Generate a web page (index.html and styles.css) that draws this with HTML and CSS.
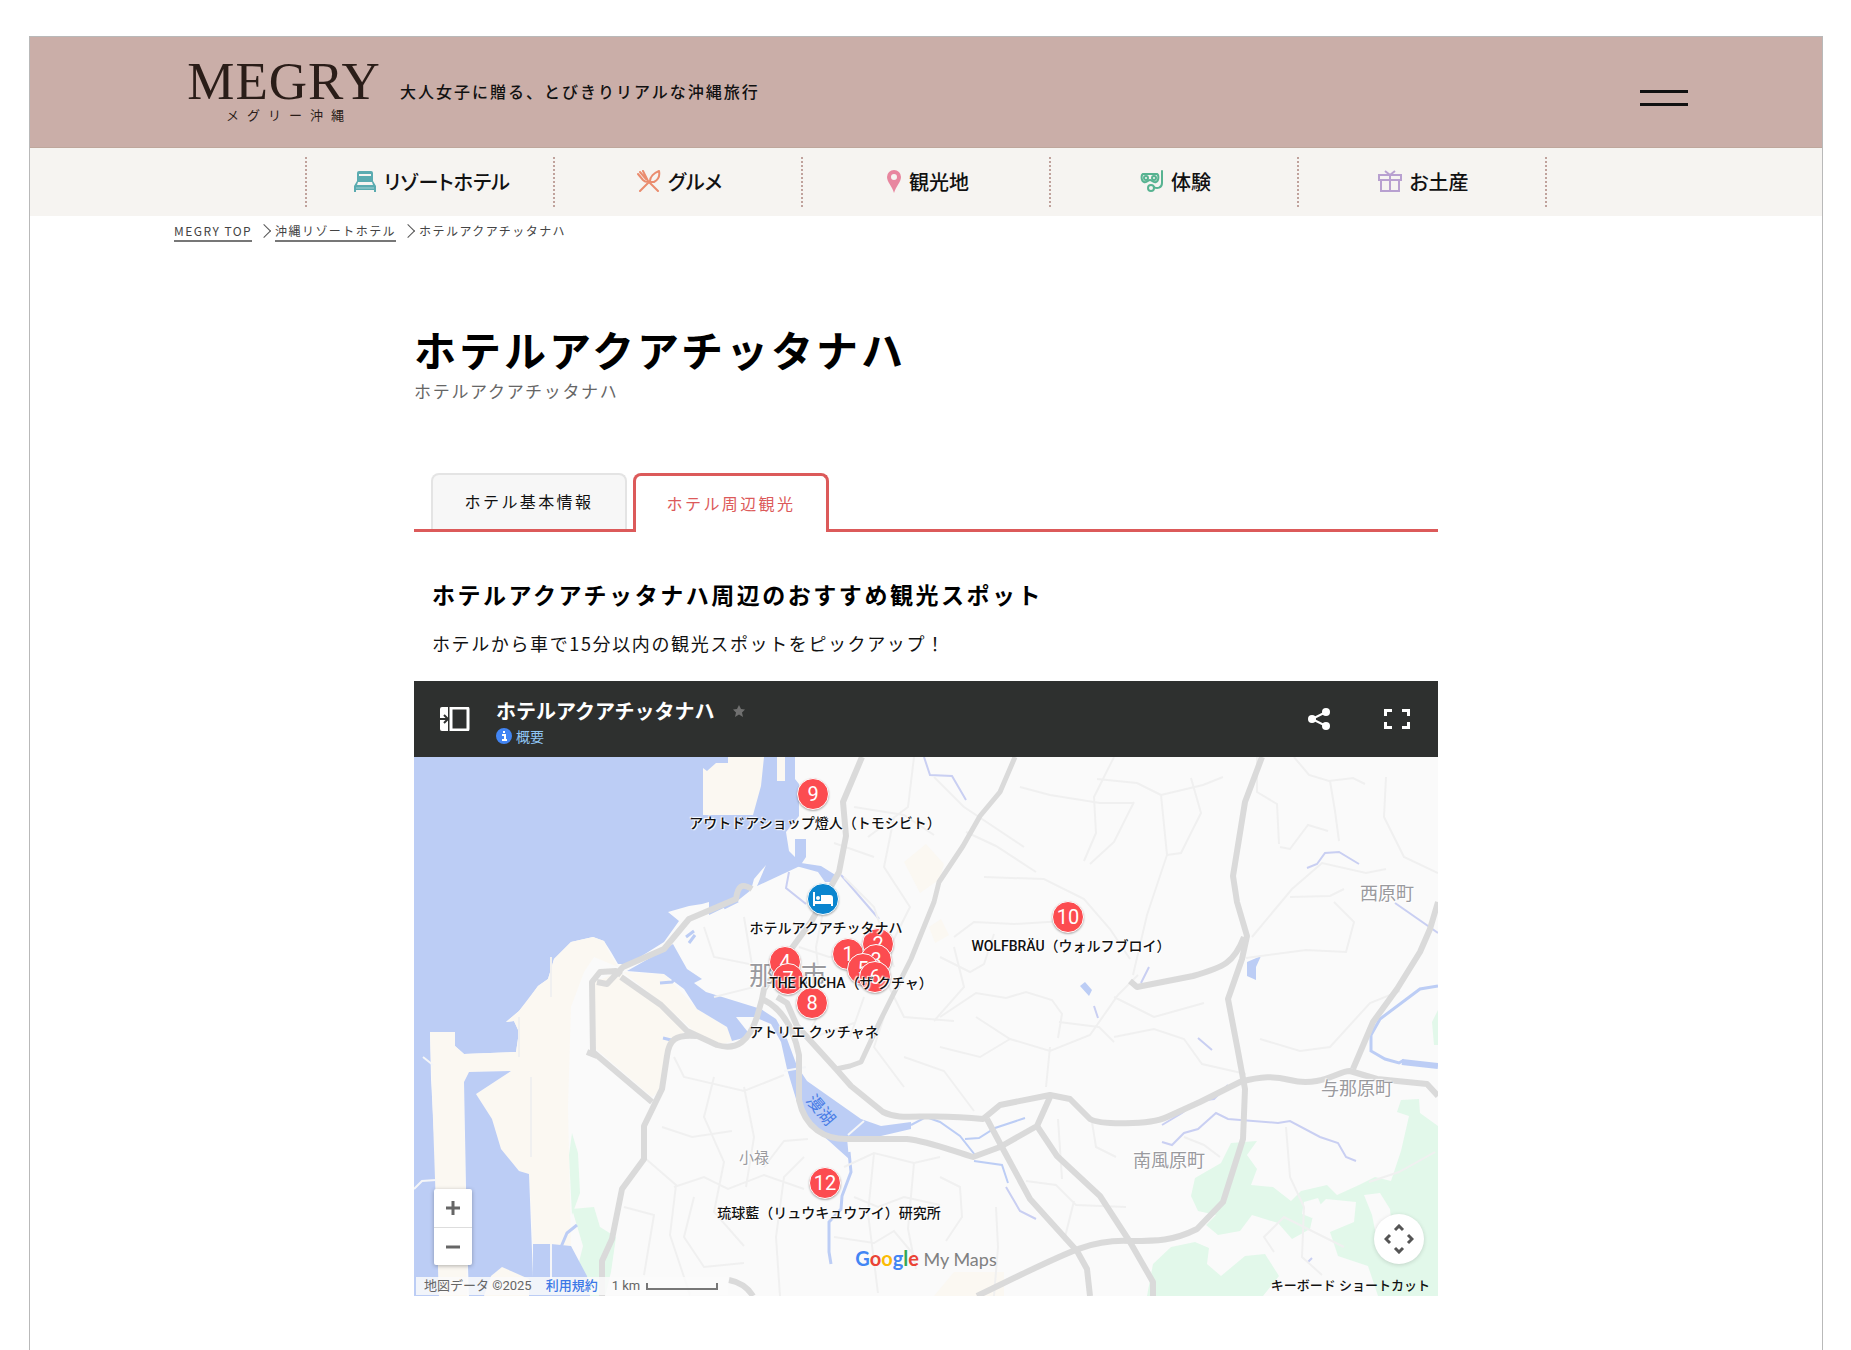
FILE: index.html
```html
<!DOCTYPE html>
<html lang="ja">
<head>
  <meta charset="UTF-8" />
  <meta name="viewport" content="width=device-width, initial-scale=1" />
  <title>ホテルアクアチッタナハ | MEGRY</title>
  <link rel="stylesheet" href="styles.css">
</head>
<body>
<div class="page">
  <header class="header">
    <a class="logo" href="#">
      <span class="logo-name">MEGRY</span>
      <span class="logo-sub">メグリー沖縄</span>
    </a>
    <p class="tagline">大人女子に贈る、とびきりリアルな沖縄旅行</p>
    <button class="menu-btn" aria-label="メニュー"><span></span><span></span></button>
  </header>

  <nav class="gnav">
    <ul>
      <li><a href="#">
        <svg width="24" height="22" viewBox="0 0 24 22"><path d="M4 11V3a2 2 0 0 1 2-2h12a2 2 0 0 1 2 2v8l3 5v6h-2v-2H3v2H1v-6z" fill="#5aabb0"/><path d="M6 5h12" stroke="#f6f4f1" stroke-width="2"/><path d="M5 12h14l1 3H4z" fill="#f6f4f1"/><path d="M3 18h18" stroke="#a5d2d4" stroke-width="1"/></svg>
        リゾートホテル</a></li>
      <li><a href="#">
        <svg width="24" height="22" viewBox="0 0 24 22" fill="none" stroke="#ea8c6e" stroke-width="2" stroke-linecap="round" stroke-linejoin="round"><path d="M1 4l5 6c2 2 4 2 5 1L6 1M3 2l6 7M11 11l10 10"/><path d="M3 21l10-10c0-4 4-8 9-10 1 5-1 9-5 11l-3 0"/></svg>
        グルメ</a></li>
      <li><a href="#">
        <svg width="16" height="23" viewBox="0 0 16 23"><path fill-rule="evenodd" d="M8 0a7 7 0 0 1 7 7c0 5-5 9-7 16C6 16 1 12 1 7a7 7 0 0 1 7-7zm0 4a3 3 0 1 0 0 6 3 3 0 0 0 0-6z" fill="#e8869f"/></svg>
        観光地</a></li>
      <li><a href="#">
        <svg width="24" height="22" viewBox="0 0 24 22" fill="none" stroke="#57b391" stroke-width="2" stroke-linecap="round"><path d="M3 4h14c2 1 2 7-1 8-3 1-4-2-6-2s-3 3-6 2S1 5 3 4z"/><circle cx="6" cy="8" r="2"/><circle cx="14" cy="8" r="2"/><path d="M22 1v12c0 5-5 6-8 4"/><circle cx="11" cy="18" r="3"/></svg>
        体験</a></li>
      <li><a href="#">
        <svg width="24" height="22" viewBox="0 0 24 22" fill="none" stroke="#b8a0d0" stroke-width="2"><path d="M1 5h22v5H1zM3 10h18v11H3zM12 5v16M7 1l5 4 5-4"/></svg>
        お土産</a></li>
    </ul>
  </nav>

  <ol class="breadcrumb">
    <li><a href="#">MEGRY TOP</a></li>
    <li><a href="#">沖縄リゾートホテル</a></li>
    <li>ホテルアクアチッタナハ</li>
  </ol>

  <main class="main">
    <h1>ホテルアクアチッタナハ</h1>
    <p class="kana">ホテルアクアチッタナハ</p>

    <div class="tabs" role="tablist">
      <button class="tab" role="tab">ホテル基本情報</button>
      <button class="tab active" role="tab" aria-selected="true">ホテル周辺観光</button>
    </div>

    <h2>ホテルアクアチッタナハ周辺のおすすめ観光スポット</h2>
    <p class="lead">ホテルから車で15分以内の観光スポットをピックアップ！</p>

    <section class="mymap">
      <div class="map-bar">
        <button aria-label="パネルを開く">
          <svg width="30" height="24" viewBox="0 0 30 24"><path d="M2 0h6v24H2a2 2 0 0 1-2-2V2a2 2 0 0 1 2-2z" fill="#fff"/><path d="M11 1h16a1 1 0 0 1 1 1v20a1 1 0 0 1-1 1H11z" fill="none" stroke="#fff" stroke-width="3"/><path d="M0 12h7M4 8l4 4-4 4" fill="none" stroke="#2e302f" stroke-width="2"/></svg>
        </button>
        <div class="map-title">
          <div class="map-name">ホテルアクアチッタナハ
            <svg width="12" height="12" viewBox="0 0 24 24"><path d="M12 0l4 8 8 1-6 6 2 9-8-5-8 5 2-9-6-6 8-1z" fill="#707070"/></svg>
          </div>
          <a class="map-info" href="#"><svg width="16" height="16" viewBox="0 0 16 16"><circle cx="8" cy="8" r="8" fill="#4285f4"/><path d="M6 7h3v5M6 12h5M7 4h2" stroke="#fff" stroke-width="2" fill="none"/></svg>概要</a>
        </div>
        <button class="share" aria-label="共有">
          <svg width="22" height="22" viewBox="0 0 22 22"><path d="M18 4L4 11l14 7" fill="none" stroke="#fff" stroke-width="2"/><circle cx="18" cy="4" r="4" fill="#fff"/><circle cx="4" cy="11" r="4" fill="#fff"/><circle cx="18" cy="18" r="4" fill="#fff"/></svg>
        </button>
        <button aria-label="全画面表示">
          <svg width="26" height="20" viewBox="0 0 26 20" fill="none" stroke="#fff" stroke-width="3"><path d="M1.500 7V1.500H8M18 1.500h6.500V7M24.500 13v5.500H18M8 18.500H1.500V13"/></svg>
        </button>
      </div>

      <div class="map-view">
        <div class="canvas">
          <svg class="tiles" width="1024" height="539" viewBox="0 0 1024 539">
            <!-- sea, with the land laid over it -->
            <rect width="1024" height="539" fill="#bccdf5"/>
            <path fill="#fafafa" d="M381 0V22L385 27V59L372 75L375 94L381 100V82H392V100L386 109L343 129L352 108L340 122L337 133L322 145L295 158V145L288 147L275 149L254 155L265 164L250 185L215 207H204L197 195L190 184L179 180L157 185L140 202L134 222L124 229L115 242L105 254L92 265L100 264L105 275L102 295L50 297L41 289V275H16L17 322L23 430L25 539H1024V0z"/>
            <!-- airport and reclaimed land -->
            <g fill="#fbf8f2">
              <path d="M289 11L293 14L302 6H314V0H350L347 29L339 58H289zM363 0H371V24H363z"/>
              <path d="M179 180L157 185L140 202L134 222L124 229L105 254L92 265L100 264L105 275L102 295L50 297L41 289V275H16L25 539H53L50 325L55 315L97 314L62 337L78 362L87 392L105 414L115 417L119 487L157 489L154 350L157 250L170 215L180 200L204 210L195 195L190 184z"/>
              <path d="M180 225L205 215L245 245L273 272L263 282L253 299L248 332L238 340L182 292z"/>
              <path d="M209 215L250 217L283 252L313 270L318 284L300 290L280 274L247 245z"/>
              <path d="M490 105l22-18 18 20-4 15-20 14zM515 170l12-8 8 16-14 8zM540 515h50v24h-70z"/>
            </g>
            <!-- parks -->
            <g fill="#e2f8ea">
              <path d="M158 376l6 20 2 40-8 22-3-60zM158 452l22-2 6 20 16 10-5 35-6 24h-17l-10-30 5-20z"/>
              <path d="M983 355l4-12 18-1 1 14 18 13v170h-60l-10-30-30-10-8-24 24-10 2-20-30-3-12 12-4 18-18 10-14-16-26-8-12 16-22 4-12-10 10-10-18-4-7-15 4-18 26-15 10-20 26-2-10 14 10 14-6 16 22 2 18 14 10-10 26-6 10 10 22-10 16-8 16 4 10-30 8-35z"/>
              <path d="M733 539l6-32 18-17 24-5 14 6-2 16 14 12 24-20 20-2 14 22-16 20z"/>
              <path d="M1018 265l6-12v35h-4z"/>
            </g>
            <path fill="#fafafa" d="M890 445l14-4 6 14-12 6-10-4zM950 438l16-2 10 16 2 20-16 6-4-20z"/>
            <g fill="#bccdf5">
              <path d="M50 325L55 315L97 314L62 337L78 362L87 392L105 414L115 417L119 520V539H55L53 482z"/>
              <path d="M119 487H137L157 489L173 519L176 539H119z"/>
              <path d="M243 197L259 187L273 212L288 222L280 226L292 235L347 252L362 262L373 282L383 309L393 324L447 362L467 369L497 365V372L467 379L433 381L435 402L415 384L403 374L387 355L382 342L373 312L367 285L357 267L340 260L322 260L337 279L318 284L313 270L283 252L270 232L250 217L213 214z"/>
              <path d="M382 109l5-3 20 3 16 10-1 6h-11l-7-10z"/>
              <path d="M833 205l14-6-5 11v13l-9-4zM666 229l5-4 7 8-3 6z"/>
            </g>
            <path fill="#fbf8f2" d="M77 519l11-9 27 12v17H70z"/>
            <path d="M0 432l8-8 14-1M9 300l10 8M137 487v40M392 310l-22 4M434 378l16-14" stroke="#f5f6f8" stroke-width="2" fill="none"/>
            <g fill="none" stroke="#bccdf5" stroke-width="3">
              <path d="M163 468l-10 8-6 14M435 395l2 20-9 24-1 13-12 13v30l2 12M246 226l12-1 4-4M249 281l12 3M272 180l8-6M275 186l6-8M310 151l14-7" />
              <path d="M497 368l15-8 14 5 20 14 15 19M560 404l28 4 6 18M551 382l14-1 16-10 30-10" stroke-width="2"/>
              <path d="M1024 229l-18 3-40 30-9 16v16l14 8 14 4 5-3" />
              <path d="M988 305l36 4" stroke-width="6"/>
            </g>
            <g fill="none" stroke="#c9cff2" stroke-width="2">
              <path d="M510 0l6 18 22 1 14 24M427 118l38 44M375 115l-3 16 20 16M893 111l10-4 8-11 14-1 20 12M981 146l43 30M727 226l8-16M592 430l14 24 16 8M748 368l20-12 16-12 16-2 14-14M748 385l10 3 12-12 14-4 18-16 12 6 50 4 12-2 30 16 18 6 8 14 10 4M680 249l4 12M784 281l14 12M894 505l4-4"/>
            </g>
            <!-- local streets -->
            <g fill="none" stroke="#f0f0f0" stroke-width="2">
              <path d="M606 30l30 8 50 8h34M700 0l-20 40 2 36-12 28M683 22l40 4 24 12 6 60-20 60-14 60M720 45l-20 40-24 22M747 38l42-10 20-8M753 98l14-2 20-40-10-35M570 120l60 2 40 20 26 30 20 30M540 180l20-15 40 2 50-3M526 200l30 15 14-8 10-30"/>
              <path d="M843 0v35l20 12 2 40M880 0l15 18 20 6 24-3 12 6M916 24l5 30 4 30M972 20l-2 40 20 40 34 16M866 90l10 2 18-24 20 6M838 180l40-48 30-26 44 10 20-4M876 140l40-1 14-7M920 145l20 20-8 30-40-2-60 8M846 282l40 12 30-4 40-44 30-12"/>
              <path d="M526 260l36-24 30 5 20-6 26 8 10 14-4 24M562 260l34 22 40 12 40-16 28-40 20-20M596 282l-30 18-40-10M636 290l-4 40M700 280l40-8 30 10 18 25 44 10M645 265l40 5 15 15M700 240l40 20 50-14"/>
              <path d="M526 420l20 10 2 30-16 24M582 450l2 40-4 49M644 362l4 60M612 424l30 4 20 20 50 2M702 400l-20-10-4-25M660 444l-10 40M770 380l20 8 16 12M872 370l4 50 14 30-2 50 20 18M955 425l30-10 36-20M860 495l-10-15 20-20 60 30"/>
              <path d="M260 300l10 20 60 14 40-16M300 320l-10 40 20 45-10 50 30 34M248 370l30 10 40-6M330 330l10 50-8 50M260 430l30-10 24 12 36-14 40 14M280 440l-10 40 20 30 40-4M232 402l30 26-6 50 20 60M390 400l-20 20-8 60 4 59M350 410l20-26 24-2M430 410l30-14 40 10 26-6M440 440l24 10 26-10 36 8M420 480l40 6 20-12 20 24M460 396l-6 60 10 80M500 406l-6 66 8 40M210 450l30 8-10 60"/>
              <path d="M290 170l10 30 50 10 20-12M330 160l10 60M300 240l40-10M385 190l30 10 44-4M410 150l-8 40 6 60-10 20M430 120l30 30 20 60M460 100l-40-14M440 50l50 8 30 20M480 60l-10 50 26 40-20 40M500 0l-6 50-40 30M520 20l30 30 60 40M470 220l20 40 50 4M450 240l-14 40M470 260l-10 30 30 40M400 280l40-14M490 300l40 14 30 40M540 190l10 40-30 34"/>
              <path d="M552 75l30 14 40 26M105 300v-40M117 320v80M137 200v40"/>
            </g>
            <!-- main roads -->
            <g fill="none" stroke="#dadada" stroke-width="6" stroke-linejoin="round">
              <path d="M448 0l-19 45 3 34-7 36-28 50-22 30-25 37-2 10-5 18c-8 24-20 34-40 28l-30-14-26-26-40-28"/>
              <path d="M338 132c-10-6-14-4-16 10l-47 20-25 30-41 18-16 17-10-2M207 218l-5-4-16 1-8 10 1 70 59 50M173 295l10 4"/>
              <path d="M283 279c-22-2-28 4-30 20l-5 33-18 37v33l-22 30-10 50-10 22v35"/>
              <path d="M350 243c20 10 30 30 35 55v45c6 28 26 40 50 39h58c20 2 40 10 66 18l27-10 37-21 13-29"/>
              <path d="M363 240l10 6 10 23 39 43 15 17 32 26c20 10 40 0 100 7l17-14 50-10 20 4 20 20c10 6 60 6 77-2l33-15 40-20c22-6 34-6 50-2 30 8 50-10 60-9l27 8 50 5 11 12"/>
              <path d="M601 0l-15 35-20 24-17 30-24 36-5 20-23 57-30 60-20 43-11 4-14 3" stroke-width="5"/>
              <path d="M848 0l-17 45-12 74 4 26 10 34-5 23-14 40 9 47 8 43-2 50-20 63-26 27c-24 12-40 12-67 12-40-2-60 10-153 55"/>
              <path d="M830 180c-10 26-20 30-51 39l-56 11-7-6"/>
              <path d="M573 362l16 30 27 50 47 52 10 18 3 27M623 369l20 30 43 40 30 46 23 40v14"/>
              <path d="M1024 145l-8 27-10 23-23 37-24 33-20 47M315 523c10 2 18 6 24 16"/>
            </g>
          </svg>

          <span class="place big naha">那覇市</span>
          <span class="place small oroku">小禄</span>
          <span class="place nishihara">西原町</span>
          <span class="place yonabaru">与那原町</span>
          <span class="place haebaru">南風原町</span>
          <span class="place lake">漫湖</span>

          <button class="pin p9">9</button>
          <button class="pin hotel" aria-label="ホテル"><svg width="20" height="14" viewBox="0 0 20 14"><path d="M1 0v14M1 11h18v3" stroke="#fff" stroke-width="2" fill="none"/><circle cx="5" cy="6" r="2" fill="#fff"/><path d="M8 3h9a3 3 0 0 1 3 3v6H2V9h6z" fill="#fff"/></svg></button>
          <button class="pin p10">10</button>
          <button class="pin p1">1</button>
          <button class="pin p2">2</button>
          <button class="pin p3">3</button>
          <button class="pin p4">4</button>
          <button class="pin p5">5</button>
          <button class="pin p6">6</button>
          <button class="pin p7">7</button>
          <button class="pin p8">8</button>
          <button class="pin p12">12</button>

          <span class="pin-label l9">アウトドアショップ燈人（トモシビト）</span>
          <span class="pin-label lhotel">ホテルアクアチッタナハ</span>
          <span class="pin-label l10">WOLFBRÄU（ウォルフブロイ）</span>
          <span class="pin-label l7">THE KUCHA（ザ クチャ）</span>
          <span class="pin-label l8">アトリエ クッチャネ</span>
          <span class="pin-label l12">琉球藍（リュウキュウアイ）研究所</span>
        </div>

        <div class="zoom">
          <button aria-label="拡大"><svg width="14" height="14" viewBox="0 0 14 14"><path d="M7 0v14M0 7h14" stroke="#666" stroke-width="3"/></svg></button>
          <button aria-label="縮小"><svg width="14" height="14" viewBox="0 0 14 14"><path d="M0 7h14" stroke="#666" stroke-width="3"/></svg></button>
        </div>
        <button class="camera" aria-label="地図のカメラ コントロール">
          <svg width="30" height="30" viewBox="0 0 30 30" fill="none" stroke="#555" stroke-width="3"><path d="M11 6l4-4 4 4M11 24l4 4 4-4M6 11l-4 4 4 4M24 11l4 4-4 4"/></svg>
        </button>
        <div class="google"><b><i class="g-blue">G</i><i class="g-red">o</i><i class="g-yellow">o</i><i class="g-blue">g</i><i class="g-green">l</i><i class="g-red">e</i></b> My Maps</div>
        <div class="credit">
          <span>地図データ ©2025</span>
          <a href="#">利用規約</a>
          <span class="scale">1 km<i></i></span>
        </div>
        <button class="shortcut">キーボード ショートカット</button>
      </div>
    </section>
  </main>
</div>
</body>
</html>
```
FILE: styles.css
```css
* {
  box-sizing: border-box;
}
body {
  margin: 0;
  padding: 36px 28px 0 29px;
  background: #fff;
  color: #111;
  font-family: "Noto Sans CJK JP", "Noto Sans", sans-serif;
}
h1, h2, p, ul, ol {
  margin: 0;
  padding: 0;
}
ul, ol {
  list-style: none;
}
a {
  color: inherit;
  text-decoration: none;
}
button {
  margin: 0;
  padding: 0;
  border: none;
  background: none;
  color: inherit;
  font-family: inherit;
  cursor: pointer;
}
svg {
  display: block;
  flex: none;
}
.page {
  min-height: calc(100vh - 36px);
  border: 1px solid #b9b9b9;
  border-bottom: none;
}

/* header */
.header {
  display: flex;
  align-items: center;
  height: 111px;
  padding: 0 134px 2px 158px;
  background: #caaea8;
  border-bottom: 1px solid #bfa79c;
}
.logo {
  display: flex;
  flex-direction: column;
  align-items: center;
  width: 192px;
  color: #2a1d18;
}
.logo-name {
  font-family: "Liberation Serif", serif;
  font-size: 53px;
  line-height: 48px;
  letter-spacing: 1px;
}
.logo-sub {
  padding-left: 10px;
  font-size: 13px;
  line-height: 20px;
  letter-spacing: 8px;
}
.tagline {
  margin-left: 20px;
  font-size: 16px;
  font-weight: 500;
  letter-spacing: 2px;
}
.menu-btn {
  display: flex;
  flex-direction: column;
  gap: 10px;
  width: 48px;
  margin: 14px 0 0 auto;
}
.menu-btn span {
  height: 3px;
  background: #111;
}

/* category nav */
.gnav {
  padding: 9px 0;
  background: #f6f4f1;
}
.gnav ul {
  display: flex;
  width: 1242px;
  max-width: 100%;
  margin: 0 auto;
  border-left: 2px dotted #c0a29c;
}
.gnav li {
  flex: 1;
  border-right: 2px dotted #c0a29c;
}
.gnav a {
  display: flex;
  align-items: center;
  justify-content: center;
  gap: 7px;
  height: 50px;
  padding: 0 0 2px 3px;
  font-size: 20px;
  font-weight: 500;
  font-feature-settings: "palt";
}

.breadcrumb {
  display: flex;
  padding: 6px 144px 0;
  color: #444;
  font-size: 12px;
  line-height: 18px;
  letter-spacing: 0.12em;
}
.breadcrumb li + li::before {
  content: "";
  display: inline-block;
  width: 9px;
  height: 9px;
  margin: 0 6px 0 7px;
  border-top: 1px solid #555;
  border-right: 1px solid #555;
  transform: rotate(45deg);
}
.breadcrumb a {
  display: inline-block;
  border-bottom: 2px solid #777;
}

/* hotel page */
.main {
  width: 1024px;
  max-width: 100%;
  margin: 0 auto;
  padding: 77px 0 54px;
}
h1 {
  color: #000;
  font-size: 42px;
  line-height: 60px;
  letter-spacing: 3px;
}
.kana {
  color: #666;
  font-size: 17px;
  line-height: 24px;
  letter-spacing: 0.1em;
}
.tabs {
  display: flex;
  gap: 6px;
  margin-top: 70px;
  padding: 0 17px;
  border-bottom: 3px solid #dc5a5a;
}
.tab {
  width: 196px;
  height: 56px;
  padding-bottom: 2px;
  border: 2px solid #e4e4e4;
  border-bottom: none;
  border-radius: 8px 8px 0 0;
  background: #f7f7f7;
  font-size: 16px;
  letter-spacing: 0.15em;
}
.tab.active {
  height: 59px;
  margin-bottom: -3px;
  border: 3px solid #dc5a5a;
  border-bottom: none;
  background: #fff;
  color: #dc5a5a;
}
h2 {
  margin: 46px 18px 0;
  color: #000;
  font-size: 23px;
  line-height: 32px;
  letter-spacing: 0.11em;
}
.lead {
  margin: 19px 18px 24px;
  font-size: 18px;
  line-height: 28px;
  letter-spacing: 0.09em;
}

/* embedded map */
.map-bar {
  display: flex;
  align-items: center;
  height: 76px;
  padding: 0 28px 0 26px;
  background: #2e302f;
  color: #fff;
}
.map-title {
  margin: 0 auto 0 26px;
  padding-top: 6px;
}
.map-name {
  display: flex;
  align-items: center;
  gap: 18px;
  font-size: 20px;
  font-weight: 700;
  line-height: 28px;
}
.map-info {
  display: flex;
  align-items: center;
  gap: 4px;
  color: #8ec5f5;
  font-size: 14px;
  line-height: 22px;
}
.share {
  margin-right: 54px;
}
.map-view {
  position: relative;
  height: 539px;
  overflow: hidden;
  background: #fafafa;
  font-family: Roboto, "Noto Sans CJK JP", sans-serif;
}
.canvas {
  position: absolute;
  top: 0;
  left: 50%;
  width: 1024px;
  height: 539px;
  margin-left: -512px;
}
.place, .pin-label {
  position: absolute;
  transform: translate(-50%, -50%);
  white-space: nowrap;
  text-shadow: 0 0 2px #fff, 1px 1px 1px #fff, -1px -1px 1px #fff;
}
.place {
  color: #9a9a9e;
  font-size: 18px;
}
.place.big {
  font-size: 26px;
}
.place.small {
  font-size: 15px;
}
.naha { left: 374px; top: 216px; }
.oroku { left: 340px; top: 399px; }
.nishihara { left: 973px; top: 135px; }
.yonabaru { left: 943px; top: 330px; }
.haebaru { left: 755px; top: 402px; }
.lake {
  left: 408px;
  top: 352px;
  color: #4a7de6;
  font-size: 17px;
  transform: translate(-50%, -50%) rotate(50deg);
  text-shadow: none;
}
.pin {
  position: absolute;
  display: flex;
  align-items: center;
  justify-content: center;
  width: 32px;
  height: 32px;
  margin: -16px 0 0 -16px;
  border: 1px solid #fff;
  border-radius: 50%;
  background: #fc4c50;
  box-shadow: 0 1px 2px rgba(0,0,0,0.3);
  color: #fff;
  font-size: 20px;
}
.pin.hotel { left: 409px; top: 142px; background: #0a85cf; }
.p9 { left: 399px; top: 37px; }
.p10 { left: 654px; top: 160px; }
.p1 { left: 434px; top: 197px; }
.p2 { left: 464px; top: 187px; }
.p3 { left: 462px; top: 203px; }
.p4 { left: 371px; top: 205px; }
.p5 { left: 449px; top: 212px; }
.p6 { left: 461px; top: 220px; }
.p7 { left: 374px; top: 222px; }
.p8 { left: 398px; top: 246px; }
.p12 { left: 411px; top: 426px; }
.pin-label {
  color: #111;
  font-size: 14px;
  font-weight: 500;
}
.l9 { left: 401px; top: 65px; }
.lhotel { left: 412px; top: 170px; }
.l10 { left: 657px; top: 188px; }
.l7 { left: 437px; top: 225px; }
.l8 { left: 400px; top: 274px; }
.l12 { left: 415px; top: 455px; }

.zoom {
  position: absolute;
  left: 20px;
  bottom: 31px;
  width: 38px;
  border-radius: 2px;
  background: #fff;
  box-shadow: 0 1px 4px rgba(0,0,0,0.3);
}
.zoom button {
  display: flex;
  align-items: center;
  justify-content: center;
  width: 100%;
  height: 38px;
}
.zoom button + button {
  border-top: 1px solid #ddd;
}
.camera {
  position: absolute;
  right: 14px;
  bottom: 32px;
  display: flex;
  align-items: center;
  justify-content: center;
  width: 50px;
  height: 50px;
  border-radius: 50%;
  background: #fff;
  box-shadow: 0 1px 4px rgba(0,0,0,0.15);
}
.google {
  position: absolute;
  left: 50%;
  bottom: 25px;
  transform: translateX(-50%);
  color: #808080;
  font-family: Lato, sans-serif;
  font-size: 18px;
  line-height: 24px;
  white-space: nowrap;
}
.google b {
  font-size: 20px;
}
.google i {
  font-style: normal;
}
.g-blue { color: #4285f4; }
.g-red { color: #ea4335; }
.g-yellow { color: #fbbc05; }
.g-green { color: #34a853; }
.credit {
  position: absolute;
  left: 2px;
  bottom: 1px;
  display: flex;
  gap: 14px;
  padding: 0 10px 0 8px;
  background: rgba(250,250,250,0.85);
  color: #666;
  font-size: 13px;
  line-height: 18px;
}
.credit a {
  color: #3c78e6;
  font-weight: 500;
}
.scale {
  display: flex;
  align-items: center;
  gap: 6px;
}
.scale i {
  width: 72px;
  height: 7px;
  border: 2px solid #777;
  border-top: none;
}
.shortcut {
  position: absolute;
  right: 8px;
  bottom: 1px;
  color: #111;
  font-size: 13px;
  font-weight: 500;
  line-height: 18px;
}
```
